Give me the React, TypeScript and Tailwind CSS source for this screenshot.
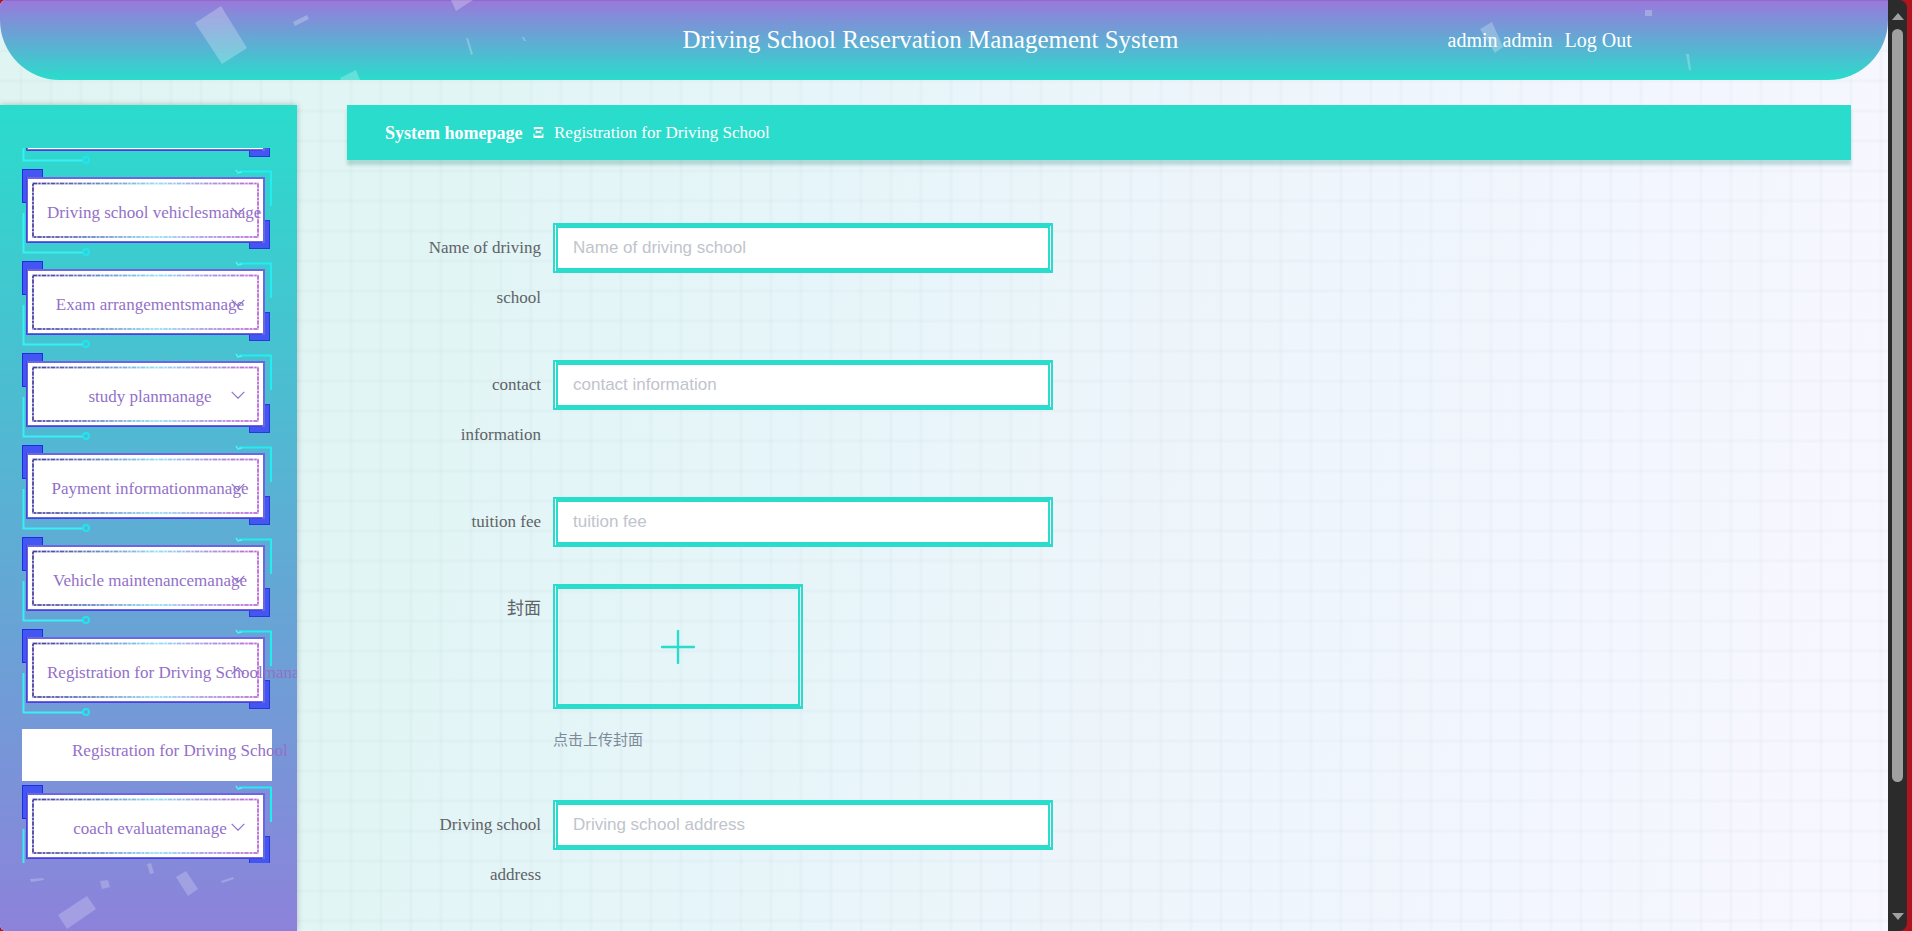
import { useLayoutEffect, useRef } from "react";

type MenuItem = { label: string; open?: boolean; children?: string[] };

const menu: MenuItem[] = [
  { label: "" },
  { label: "Driving school vehiclesmanage" },
  { label: "Exam arrangementsmanage" },
  { label: "study planmanage" },
  { label: "Payment informationmanage" },
  { label: "Vehicle maintenancemanage" },
  {
    label: "Registration for Driving Schoolmanage",
    open: true,
    children: ["Registration for Driving School"],
  },
  { label: "coach evaluatemanage" },
];

function Frame() {
  return (
    <svg
      viewBox="0 0 250 88"
      className="pointer-events-none absolute inset-0 h-[88px] w-[250px]"
      fill="none"
      aria-hidden="true"
    >
      <defs>
        <linearGradient id="dash" gradientUnits="userSpaceOnUse" x1="10" y1="0" x2="237" y2="0">
          <stop offset="0" stopColor="#2a1f8f" />
          <stop offset="0.25" stopColor="#4a66b8" />
          <stop offset="0.55" stopColor="#7fdcf2" />
          <stop offset="0.75" stopColor="#9a8be0" />
          <stop offset="1" stopColor="#b04fd0" />
        </linearGradient>
      </defs>
      <rect x="0.5" y="0.5" width="20" height="33" fill="#4456f2" stroke="#1c2ee0" />
      <rect x="227.5" y="51.5" width="20" height="28" fill="#4456f2" stroke="#2a38d8" />
      <path d="M1.5 44V83.5H61" stroke="#36f0f4" strokeWidth="2" />
      <circle cx="64" cy="83" r="3" stroke="#22e4ee" strokeWidth="2" />
      <path d="M217 2.5H249V37" stroke="#22eef2" strokeWidth="2" />
      <path d="M214 1l2 3 4-1" stroke="#4ff2f4" strokeWidth="1.5" />
      <rect x="5" y="9" width="237" height="64" fill="#fff" stroke="#6c66e2" strokeWidth="2" />
      <path d="M4.5 8V73.500H240" stroke="#4a3fe0" />
      <rect x="11" y="14.500" width="225" height="53.500" stroke="url(#dash)" strokeOpacity="0.35" strokeWidth="2" />
      <rect
        x="11"
        y="14.500"
        width="225"
        height="53.500"
        stroke="url(#dash)"
        strokeOpacity="0.8"
        strokeWidth="1.600"
        strokeDasharray="4 1.500 2 1.500"
      />
    </svg>
  );
}

function Chevron({ up }: { up?: boolean }) {
  return (
    <svg
      viewBox="0 0 14 8"
      className="absolute right-[27px] top-[38px] h-2 w-3.5"
      fill="none"
      stroke="#8f74c8"
      strokeWidth="1.2"
      aria-hidden="true"
    >
      <path d={up ? "M.7 7.200L7 .8l6.300 6.400" : "M.7.8L7 7.200 13.300.8"} />
    </svg>
  );
}

function Header() {
  return (
    <header className="relative flex h-20 shrink-0 items-center overflow-hidden rounded-b-[60px] bg-linear-to-b/srgb from-[#9a78dc] to-[#2adccc] text-white">
      <svg
        viewBox="0 0 1888 80"
        preserveAspectRatio="none"
        className="absolute inset-0 h-20 w-full"
        fill="#fff"
        fillOpacity="0.25"
        aria-hidden="true"
      >
        <path d="M0 0H1888V1H0z" fill="#8a60b8" fillOpacity="0.6" />
        <path d="M195 23L221 6 247 48 222 64z" />
        <path d="M293 22L307 15 309 19 295 26z" />
        <path d="M451 0H473L456 11z" />
        <path d="M466 38H468L473 54 471 55z" />
        <path d="M522 37H524L526 41H524z" />
        <path d="M340 78L356 70 360 80H341z" />
        <path d="M1480 29L1492 22 1503 47 1495 53z" />
        <path d="M1645 10h7v6h-7z" />
        <path d="M1686 54H1689L1691 70H1689z" />
      </svg>
      <div className="flex-[682]" />
      <h1 className="relative whitespace-nowrap text-[25px] leading-8">
        Driving School Reservation Management System
      </h1>
      <div className="flex-[269]" />
      <div className="relative flex gap-3 whitespace-nowrap text-xl font-medium">
        <span>admin admin</span>
        <button type="button">Log Out</button>
      </div>
      <div className="flex-[256]" />
    </header>
  );
}

function Sidebar() {
  const nav = useRef<HTMLElement>(null);
  useLayoutEffect(() => {
    if (nav.current) nav.current.scrollTop = 71;
  }, []);
  return (
    <aside className="relative flex w-[297px] shrink-0 flex-col bg-linear-to-b/srgb from-[#2adccc] to-[#8d82db] pb-[68px] pt-[43px] shadow-[0_0_6px_rgba(0,0,0,0.25)]">
      <svg
        viewBox="0 0 297 68"
        className="absolute bottom-0 left-0 h-[68px] w-[297px]"
        fill="#fff"
        fillOpacity="0.22"
        aria-hidden="true"
      >
        <path d="M30 16L43 15 44 17 31 19z" />
        <path d="M100 18L108 17 110 24 102 26z" />
        <path d="M58 52L87 33 96 46 67 66z" />
        <path d="M147 1L151 0 154 10 150 11z" />
        <path d="M176 14L186 8 198 26 188 33z" />
        <path d="M221 18L233 14 234 16 222 20z" />
      </svg>
      <nav ref={nav} className="min-h-0 flex-1 overflow-hidden text-[17px] text-[#9370c8]">
        <ul className="flex flex-col gap-1 px-[22px] pb-4">
          {menu.map((item, i) => (
            <li key={i} className="w-[250px]">
              {item.label ? (
                <button
                  type="button"
                  aria-expanded={!!item.open}
                  className="relative block h-[88px] w-full pl-[25px] pr-[19px] text-center"
                >
                  <Frame />
                  <span className="relative block whitespace-nowrap leading-[88px]">{item.label}</span>
                  <Chevron up={item.open} />
                </button>
              ) : (
                <div className="relative h-[88px]">
                  <Frame />
                </div>
              )}
              {item.children && (
                <ul className="mt-3 bg-white pb-2">
                  {item.children.map((c) => (
                    <li key={c}>
                      <a href="#registration" className="block whitespace-nowrap pl-[50px] leading-[44px]">
                        {c}
                      </a>
                    </li>
                  ))}
                </ul>
              )}
            </li>
          ))}
        </ul>
      </nav>
    </aside>
  );
}

const labelClass = "w-[142px] shrink-0 pr-3 text-right text-[17px] leading-[50px] text-[#606266]";
const boxClass = "border-5 border-[#2adccc] [border-style:solid_double]";

function Field({ id, label }: { id: string; label: string }) {
  return (
    <div className="flex items-start">
      <label htmlFor={id} className={labelClass}>
        {label}
      </label>
      <input
        id={id}
        type="text"
        placeholder={label}
        className={`${boxClass} h-[50px] w-[500px] bg-white px-[15px] font-['Liberation_Sans',sans-serif] text-[17px] text-[#606266] outline-none placeholder:text-[#c0c4cc]`}
      />
    </div>
  );
}

function Main() {
  return (
    <main className="min-w-0 flex-1 pl-[50px] pr-[37px]">
      <div className="flex h-[55px] items-center gap-2.5 bg-[#2adccc] px-[38px] text-[17px] text-white shadow-[0_5px_3px_rgba(60,150,135,0.3)]">
        <a href="#home" className="text-lg font-bold">
          System homepage
        </a>
        <span className="font-bold">Ξ</span>
        <span>Registration for Driving School</span>
      </div>
      <form className="flex flex-col gap-[37px] pl-16 pt-[63px]">
        <Field id="name" label="Name of driving school" />
        <Field id="contact" label="contact information" />
        <Field id="fee" label="tuition fee" />
        <div className="flex items-start">
          <label htmlFor="cover" className={labelClass}>
            封面
          </label>
          <div>
            <button
              id="cover"
              type="button"
              aria-label="封面"
              className={`${boxClass} flex h-[125px] w-[250px] items-center justify-center`}
            >
              <svg viewBox="0 0 34 34" className="size-[34px]" stroke="#2adccc" strokeWidth="2.4" aria-hidden="true">
                <path d="M17 1V33M1 17H33" strokeLinecap="round" />
              </svg>
            </button>
            <p className="pt-2 text-[15px] leading-[46px] text-[#7f8a99]">点击上传封面</p>
          </div>
        </div>
        <Field id="address" label="Driving school address" />
      </form>
    </main>
  );
}

function Scrollbar() {
  return (
    <div className="flex w-[19px] shrink-0 flex-col items-center bg-[#2b2b2b] pb-[10px] pt-3" aria-hidden="true">
      <svg viewBox="0 0 14 8" className="h-2 w-3.5" fill="#a0a0a0">
        <path d="M7 1l6 7H1z" />
      </svg>
      <div className="my-[9px] flex w-[11px] flex-1 flex-col">
        <div className="h-[86%] rounded-full bg-[#a0a0a0]" />
      </div>
      <svg viewBox="0 0 14 8" className="h-2 w-3.5" fill="#a0a0a0">
        <path d="M1 0h12L7 7z" />
      </svg>
    </div>
  );
}

export default function App() {
  return (
    <div className="h-screen overflow-hidden bg-[#b0151f] pr-[5px] font-['Liberation_Serif','Noto_Sans_CJK_SC',serif]">
      <div className="flex h-full overflow-hidden rounded-md rounded-r-lg">
        <div className="flex min-w-0 flex-1 flex-col overflow-hidden bg-[linear-gradient(100deg,#e0f5f2_0%,#e2f5f5_25%,#e6f5f9_42%,#edf5fb_60%,#f2f6fe_80%,#f8f7ff_100%)]">
          <div className="flex min-h-0 flex-1 flex-col bg-[repeating-linear-gradient(90deg,transparent_0px,transparent_19px,rgba(100,140,150,0.035)_20px,rgba(100,140,150,0.035)_22px,transparent_23px,transparent_30px),repeating-linear-gradient(180deg,transparent_0px,transparent_19px,rgba(100,140,150,0.035)_20px,rgba(100,140,150,0.035)_22px,transparent_23px,transparent_30px)]">
            <Header />
            <div className="mt-[25px] flex min-h-0 flex-1">
              <Sidebar />
              <Main />
            </div>
          </div>
        </div>
        <Scrollbar />
      </div>
    </div>
  );
}
